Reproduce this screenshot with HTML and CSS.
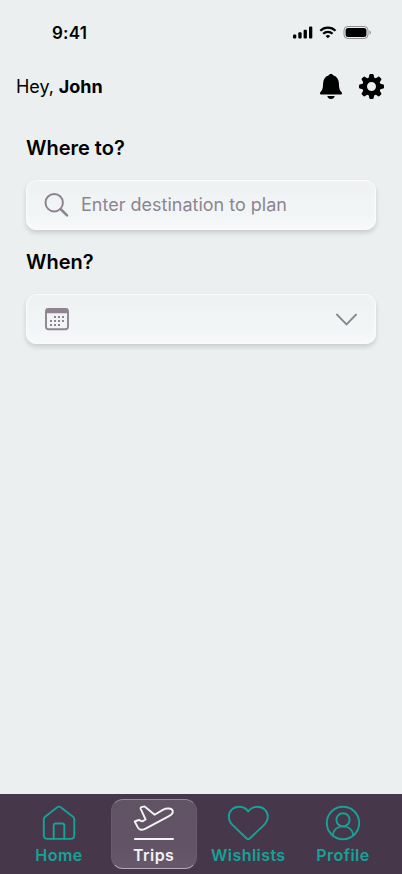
FILE: index.html
```html
<!DOCTYPE html>
<html lang="en">
<head>
<meta charset="utf-8">
<meta name="viewport" content="width=device-width, initial-scale=1">
<title>Trips</title>
<link rel="stylesheet" href="styles.css">
</head>
<body>
<div class="app">
  <div class="status">
    <span class="time">9:41</span>
    <svg class="status-icons" width="80" height="14" viewBox="292 26 80 14">
      <rect x="293" y="34.5" width="3.3" height="4" rx="1"/>
      <rect x="298.3" y="32.3" width="3.3" height="6.2" rx="1"/>
      <rect x="303.6" y="29.8" width="3.3" height="8.7" rx="1"/>
      <rect x="309" y="26.6" width="3.3" height="11.9" rx="1"/>
      <g fill="none" stroke="#000" stroke-width="2.2">
        <path d="M320.3 30.7a11 11 0 0 1 15.2 0"/>
        <path d="M323.2 33.8a6.8 6.8 0 0 1 9.4 0"/>
      </g>
      <path d="M327.9 38.3l-2.3-2.4a3.5 3.5 0 0 1 4.6 0z"/>
      <rect x="344" y="26.5" width="24" height="12" rx="3.8" fill="none" stroke="#000" stroke-opacity=".4"/>
      <path d="M369.5 30.6v4c.8-.3 1.4-1.1 1.4-2s-.6-1.7-1.4-2z" opacity=".4"/>
      <rect x="345.6" y="28.1" width="20.8" height="8.8" rx="2.5"/>
    </svg>
  </div>
  <header class="header">
    <p class="greeting">Hey, <b>John</b></p>
    <div class="actions">
      <svg width="24" height="26" viewBox="319 74 24 26">
        <path d="M331 74c-1.2 0-2.1.6-2.5 1.500-3.500 1-5.300 4-5.400 8-.1 5.400-1 6.700-2.500 8.500-1 1.100-.9 2.400.5 2.400h19.800c1.400 0 1.500-1.300.5-2.400-1.500-1.800-2.400-3.100-2.500-8.500-.1-4-1.900-7-5.400-8-.4-.9-1.300-1.500-2.500-1.500z"/>
        <path d="M327.300 95.900h7.400c-.4 1.900-1.700 3-3.700 3s-3.300-1.100-3.700-3z"/>
      </svg>
      <svg width="26" height="26" viewBox="-12.500 -12.500 26 26">
        <defs><path id="tooth" d="M-3-8l.9-3.700q.2-.8 1-.8h2.200q.8 0 1 .8L3-8z"/></defs>
        <use href="#tooth"/><use href="#tooth" transform="rotate(45)"/><use href="#tooth" transform="rotate(90)"/><use href="#tooth" transform="rotate(135)"/><use href="#tooth" transform="rotate(180)"/><use href="#tooth" transform="rotate(225)"/><use href="#tooth" transform="rotate(270)"/><use href="#tooth" transform="rotate(315)"/>
        <circle r="6.900" fill="none" stroke="#000" stroke-width="4.800"/>
      </svg>
    </div>
  </header>
  <main class="main">
    <h2 class="label">Where to?</h2>
    <div class="field">
      <svg class="field-icon" width="26" height="26" viewBox="44 192 26 26">
        <circle cx="54.200" cy="202.700" r="8.700" stroke-width="2"/>
        <path d="M60.500 209l6.500 6.300" stroke-width="2.500"/>
      </svg>
      <span class="placeholder">Enter destination to plan</span>
    </div>
    <h2 class="label">When?</h2>
    <div class="field">
      <svg class="field-icon" width="26" height="26" viewBox="44 306 26 26">
        <rect x="46" y="308.900" width="22" height="20.300" rx="2.500" stroke-width="1.900"/>
        <path d="M46 311h22" stroke-width="4.500" stroke-linecap="butt"/>
        <path d="M54 317h11M50 321h15M50 325h11" stroke-width="2" stroke-linecap="butt" stroke-dasharray="2 2"/>
      </svg>
      <svg class="field-icon chevron" width="22" height="14" viewBox="335 312 22 14">
        <path d="M337 314.600l9.500 9.800 9.500-9.800" stroke-width="2"/>
      </svg>
    </div>
  </main>
  <nav class="nav">
    <a class="tab">
      <svg width="42" height="36" viewBox="38 805 42 36">
        <path d="M57.300 807.200q1.700-1.100 3.400 0l12.300 9.500q1.300 1 1.300 2.600v15.900q0 3.700-3.700 3.700H47.500q-3.700 0-3.700-3.700v-15.900q0-1.600 1.300-2.600z"/>
        <path d="M53.700 838.700v-13.200q0-2 2-2h6.600q2 0 2 2v13.200"/>
      </svg>
      <span>Home</span>
    </a>
    <a class="tab active">
      <svg width="42" height="36" viewBox="133 805 42 36">
        <path d="M134.700 821.500l4-1.500 3.700 1.300 3.200-1.800-4.900-10.700q-.5-1.200.7-1.600l2.200-.6q1.200-.2 2 .6l9 7.500 8.600-5.100q2.600-1.300 5.400-1.100 3.500.2 4.100 2.200c.7 2.400-1.200 4-3.700 5.400l-23.400 12.600q-2.600 1.400-5.300.8-1.500-.3-2.200-1.600z"/>
        <path d="M134.200 839h39.500" stroke-linecap="butt" stroke-width="1.900"/>
      </svg>
      <span>Trips</span>
    </a>
    <a class="tab">
      <svg width="42" height="36" viewBox="227 805 42 36">
        <path d="M246.700 838.500l-13.800-13.100c-3-3-4.100-5.700-4.100-8.600 0-5.700 4.400-10 10.200-10 3.700 0 7.100 1.700 9.200 4.700 2.200-3 5.700-4.700 9.300-4.700 5.800 0 10.300 4.300 10.300 10 0 2.900-1.200 5.600-4.200 8.600l-13.800 13.100q-1.600 1.300-3.100 0z"/>
      </svg>
      <span>Wishlists</span>
    </a>
    <a class="tab">
      <svg width="42" height="36" viewBox="322 805 42 36">
        <circle cx="343" cy="823" r="16.200"/>
        <circle cx="343" cy="819.800" r="6.600"/>
        <path d="M332.700 835.300c.8-5.700 4.900-8.900 10.300-8.900s9.500 3.200 10.300 8.900"/>
      </svg>
      <span>Profile</span>
    </a>
  </nav>
</div>
</body>
</html>
```
FILE: styles.css
```css
* { box-sizing: border-box; }
body { margin: 0; font-family: Inter, "Liberation Sans", sans-serif; color: #000; background: #ebeff0; }
svg { display: block; flex: none; }
.app { height: 874px; display: flex; flex-direction: column; overflow: hidden; }
.status { height: 62px; padding: 26px 30px 0 52px; display: flex; justify-content: space-between; align-items: flex-start; }
.time { font-size: 17px; line-height: 14px; font-weight: 600; letter-spacing: .2px; }
.header { height: 50px; padding: 0 17px 0 16px; display: flex; justify-content: space-between; align-items: center; }
.greeting { margin: 0; font-size: 18px; line-height: 24px; letter-spacing: -.05px; }
.greeting b { font-weight: 700; }
.actions { display: flex; gap: 16px; align-items: center; }
.main { flex: 1; padding: 24px 26px 0; }
.label { margin: 0 0 20px; font-size: 20px; line-height: 24px; font-weight: 600; letter-spacing: 0; }
.field { height: 50px; margin-bottom: 20px; padding: 0 18px; display: flex; align-items: center; gap: 11px; border-radius: 10px; background: linear-gradient(#eeeff1, #f0f4f5 35%, #f1f5f6 65%, #f7f8fa); border: 1px solid #f9fbfc; box-shadow: 0 3px 5px rgba(0, 0, 0, .14), inset 0 0 6px rgba(255, 255, 255, .45); }
.field-icon { fill: none; stroke: #8e8490; stroke-linecap: round; }
.field .field-icon:first-child { margin-left: -1px; }
.placeholder { font-size: 18px; line-height: 24px; color: #8e8490; letter-spacing: 0; }
.chevron { margin-left: auto; }
.nav { height: 80px; background: #46384a; padding: 5px 16px; display: flex; justify-content: space-between; align-items: flex-start; }
.tab { width: 86px; height: 70px; padding-top: 5px; border: 1px solid transparent; border-radius: 12px; display: flex; flex-direction: column; align-items: center; color: #17a298; }
.tab svg { fill: none; stroke: currentColor; stroke-width: 1.9; stroke-linecap: round; stroke-linejoin: round; }
.tab span { margin-top: 4px; font-size: 16px; line-height: 20px; font-weight: 600; letter-spacing: .45px; }
.active { color: #f0f2f3; background: linear-gradient(#605364, #625466 70%, #67596b); border-color: #958a98 #70637480 #b4aab7; }
```
